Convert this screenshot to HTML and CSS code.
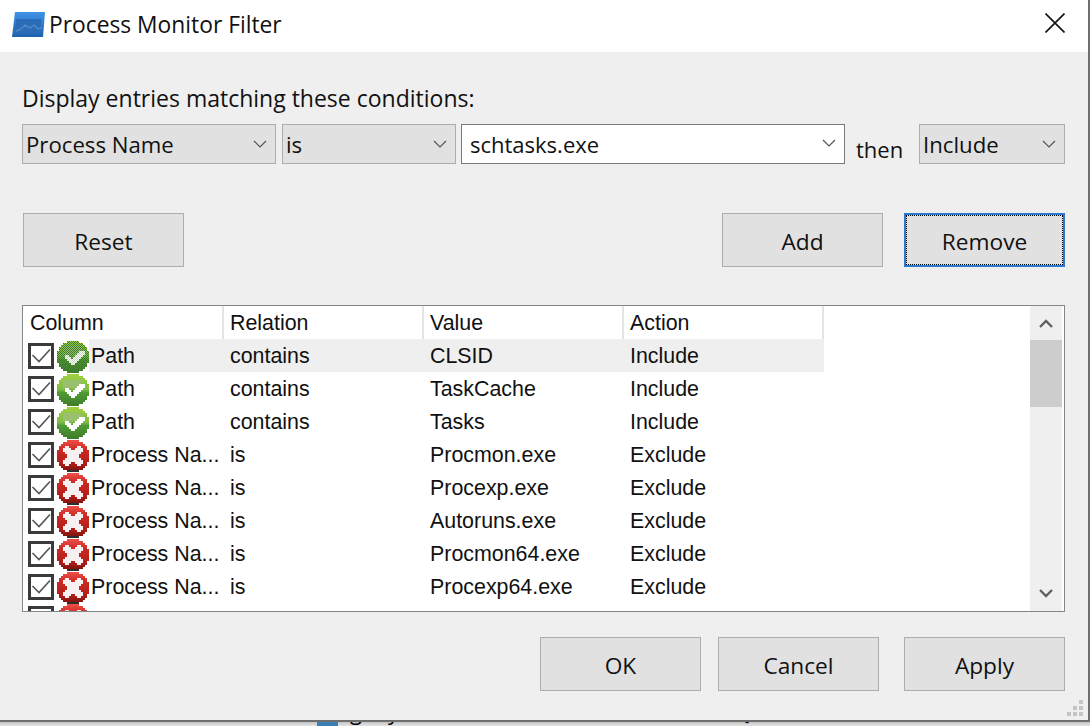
FILE: index.html
```html
<!DOCTYPE html>
<html lang="en">
<head>
  <meta charset="UTF-8">
  <title>Process Monitor Filter</title>
  <link rel="stylesheet" href="styles.css">
</head>
<body>

  <svg class="defs" width="0" height="0">
    <defs>
      <linearGradient id="greenFill" x1="0" y1="0" x2="0" y2="1">
        <stop offset="0" stop-color="#a2d040"/>
        <stop offset="0.48" stop-color="#7fbc48"/>
        <stop offset="0.58" stop-color="#4f9a35"/>
        <stop offset="1" stop-color="#3f7d2a"/>
      </linearGradient>
      <linearGradient id="redFill" x1="0" y1="0" x2="0" y2="1">
        <stop offset="0" stop-color="#ee5048"/>
        <stop offset="0.3" stop-color="#cc2a24"/>
        <stop offset="0.75" stop-color="#b01c18"/>
        <stop offset="1" stop-color="#6e100c"/>
      </linearGradient>
      <linearGradient id="appFill" x1="0" y1="0" x2="0" y2="1">
        <stop offset="0" stop-color="#3f92e6"/>
        <stop offset="1" stop-color="#1f62ae"/>
      </linearGradient>
      <pattern id="dither" width="1" height="1" patternUnits="userSpaceOnUse">
        <rect width="0.5" height="0.5" fill="#3d7a2c"/>
        <rect x="0.5" y="0.5" width="0.5" height="0.5" fill="#3d7a2c"/>
      </pattern>
      <symbol id="okIcon" viewBox="0 0 16 16" shape-rendering="crispEdges">
        <path fill="url(#greenFill)" d="M5 0h6v1h2v1h1v1h1v2h1v6h-1v2h-1v1h-1v1h-2v1h-6v-1h-2v-1h-1v-1h-1v-2h-1v-6h1v-2h1v-1h1v-1h2z"/>
        <path fill="#98c070" d="M3 3h9v4h-9z"/>
        <path fill="#fff" d="M12 5h2v2h-1v1h-1v1h-1v1h-1v1h-1v1h-2v-1h-1v-1h-1v-1h-1v-2h2v1h1v1h1v-1h1v-1h1v-1h1v-1h1z"/>
      </symbol>
      <symbol id="noIcon" viewBox="0 0 16 16" shape-rendering="crispEdges">
        <path fill="url(#redFill)" d="M5 0h6v1h2v1h1v1h1v2h1v6h-1v2h-1v1h-1v1h-2v1h-6v-1h-2v-1h-1v-1h-1v-2h-1v-6h1v-2h1v-1h1v-1h2z"/>
        <path fill="#2e2e2e" d="M5 15h6v1h-6z"/>
        <path fill="#f6f0f0" d="M3 4h1v-1h2v1h1v1h2v-1h1v-1h2v1h1v2h-1v1h-1v2h1v1h1v2h-1v1h-2v-1h-1v-1h-2v1h-1v1h-2v-1h-1v-2h1v-1h1v-2h-1v-1h-1z"/>
      </symbol>
      <symbol id="tick" viewBox="0 0 20 20">
        <path d="M1.5 9l6.5 6.5L19 3.5" fill="none" stroke="#555" stroke-width="1.6"/>
      </symbol>
      <symbol id="chevron" viewBox="0 0 14 8">
        <path d="M1 1l6 6 6-6" fill="none" stroke="#555" stroke-width="1.2"/>
      </symbol>
    </defs>
  </svg>

  <div class="window">
    <div class="titlebar">
      <svg class="app-icon" width="34" height="27" viewBox="0 0 34 27">
        <path d="M4 1h30l-2 25H1z" fill="url(#appFill)"/>
        <path d="M5 8h25l-1 15H4z" fill="#2a6cb8"/>
        <path d="M5 20l5-2 4-4 5 3 4-3 4 4 4-1" fill="none" stroke="#4f86c6" stroke-width="1.5"/>
      </svg>
      <span class="title">Process Monitor Filter</span>
      <svg class="close" width="20" height="20" viewBox="0 0 20 20">
        <path d="M0.5 0.5l19 19M19.5 0.5l-19 19" stroke="#111" stroke-width="1.6"/>
      </svg>
    </div>

    <div class="content">
      <div class="label">Display entries matching these conditions:</div>

      <div class="conditions">
        <div class="combo combo-column">Process Name<svg class="arrow"><use href="#chevron"/></svg></div>
        <div class="combo combo-relation">is<svg class="arrow"><use href="#chevron"/></svg></div>
        <div class="combo combo-value">schtasks.exe<svg class="arrow"><use href="#chevron"/></svg></div>
        <span class="then">then</span>
        <div class="combo combo-action">Include<svg class="arrow"><use href="#chevron"/></svg></div>
      </div>

      <div class="button-row middle-buttons">
        <button class="button reset">Reset</button>
        <button class="button">Add</button>
        <button class="button focused"><span>Remove</span></button>
      </div>

      <div class="list">
        <div class="list-main">
          <div class="row header">
            <div class="cell">Column</div>
            <div class="cell">Relation</div>
            <div class="cell">Value</div>
            <div class="cell">Action</div>
          </div>
          <div class="row selected">
            <div class="cell first"><i class="check"><svg><use href="#tick"/></svg></i>
              <svg class="state" viewBox="0 0 16 16" shape-rendering="crispEdges">
                <use href="#okIcon" width="16" height="16"/>
                <path fill="url(#dither)" d="M5 0h6v1h2v1h1v1h1v2h1v6h-1v2h-1v1h-1v1h-2v1h-6v-1h-2v-1h-1v-1h-1v-2h-1v-6h1v-2h1v-1h1v-1h2z"/>
                <path fill="#fff" opacity="0.7" d="M12 5h2v2h-1v1h-1v1h-1v1h-1v1h-1v1h-2v-1h-1v-1h-1v-1h-1v-2h2v1h1v1h1v-1h1v-1h1v-1h1v-1h1z"/>
              </svg>
              <span class="name">Path</span></div>
            <div class="cell">contains</div><div class="cell">CLSID</div><div class="cell">Include</div>
          </div>
          <div class="row">
            <div class="cell first"><i class="check"><svg><use href="#tick"/></svg></i><svg class="state"><use href="#okIcon"/></svg><span class="name">Path</span></div>
            <div class="cell">contains</div><div class="cell">TaskCache</div><div class="cell">Include</div>
          </div>
          <div class="row">
            <div class="cell first"><i class="check"><svg><use href="#tick"/></svg></i><svg class="state"><use href="#okIcon"/></svg><span class="name">Path</span></div>
            <div class="cell">contains</div><div class="cell">Tasks</div><div class="cell">Include</div>
          </div>
          <div class="row">
            <div class="cell first"><i class="check"><svg><use href="#tick"/></svg></i><svg class="state"><use href="#noIcon"/></svg><span class="name">Process Na...</span></div>
            <div class="cell">is</div><div class="cell">Procmon.exe</div><div class="cell">Exclude</div>
          </div>
          <div class="row">
            <div class="cell first"><i class="check"><svg><use href="#tick"/></svg></i><svg class="state"><use href="#noIcon"/></svg><span class="name">Process Na...</span></div>
            <div class="cell">is</div><div class="cell">Procexp.exe</div><div class="cell">Exclude</div>
          </div>
          <div class="row">
            <div class="cell first"><i class="check"><svg><use href="#tick"/></svg></i><svg class="state"><use href="#noIcon"/></svg><span class="name">Process Na...</span></div>
            <div class="cell">is</div><div class="cell">Autoruns.exe</div><div class="cell">Exclude</div>
          </div>
          <div class="row">
            <div class="cell first"><i class="check"><svg><use href="#tick"/></svg></i><svg class="state"><use href="#noIcon"/></svg><span class="name">Process Na...</span></div>
            <div class="cell">is</div><div class="cell">Procmon64.exe</div><div class="cell">Exclude</div>
          </div>
          <div class="row">
            <div class="cell first"><i class="check"><svg><use href="#tick"/></svg></i><svg class="state"><use href="#noIcon"/></svg><span class="name">Process Na...</span></div>
            <div class="cell">is</div><div class="cell">Procexp64.exe</div><div class="cell">Exclude</div>
          </div>
          <div class="row">
            <div class="cell first"><i class="check"><svg><use href="#tick"/></svg></i><svg class="state"><use href="#noIcon"/></svg></div>
          </div>
        </div>
        <div class="scrollbar">
          <svg class="scroll-arrow arrow-up" width="14" height="9" viewBox="0 0 14 9"><path d="M1 8l6-6 6 6" fill="none" stroke="#606060" stroke-width="2.4"/></svg>
          <div class="thumb"></div>
          <div class="track"></div>
          <svg class="scroll-arrow arrow-down" width="14" height="9" viewBox="0 0 14 9"><path d="M1 1l6 6 6-6" fill="none" stroke="#606060" stroke-width="2.4"/></svg>
        </div>
      </div>

      <div class="button-row footer-buttons">
        <button class="button">OK</button>
        <button class="button">Cancel</button>
        <button class="button">Apply</button>
      </div>
    </div>

    <svg class="grip" width="16" height="16" viewBox="0 0 16 16">
      <path fill="#c4c4c4" d="M12 0h4v4h-4zM6 6h4v4h-4zM12 6h4v4h-4zM0 12h4v4h-4zM6 12h4v4h-4zM12 12h4v4h-4z"/>
    </svg>
  </div>

  <div class="behind">
    <i class="tile"></i>
    <span class="peek peek-g">g</span>
    <span class="peek peek-y">y</span>
    <span class="peek peek-b">{</span>
  </div>

</body>
</html>
```

FILE: styles.css
```css
* {
  box-sizing: border-box;
}

html, body {
  margin: 0;
  height: 726px;
  overflow: hidden;
}

body {
  background: #d9d9d9;
  font-family: "Open Sans", sans-serif;
  color: #111;
}

.defs {
  display: block;
  height: 0;
}

.window {
  position: relative;
  width: 1090px;
  height: 722px;
  background: #efefef;
  border-right: 2px solid #6e6e6e;
  border-bottom: 2px solid #6e6e6e;
}

.titlebar {
  display: flex;
  align-items: center;
  height: 52px;
  background: #fff;
  padding: 0 23px 0 11px;
}

.app-icon {
  filter: blur(0.7px);
  margin-right: 4px;
  margin-bottom: 3px;
}

.title {
  font-size: 22.8px;
  flex: 1;
  margin-bottom: 4px;
}

.close {
  margin-bottom: 6px;
}

.content {
  padding: 29px 23px 0 22px;
}

.label {
  font-size: 23px;
  line-height: 34px;
  margin-bottom: 9px;
}

.conditions {
  display: flex;
  align-items: center;
  height: 40px;
}

.combo {
  display: flex;
  align-items: center;
  justify-content: space-between;
  height: 40px;
  padding: 3px 8px 2px 3px;
  background: #e1e1e1;
  border: 1px solid #adadad;
  font-size: 22.2px;
}

.combo-column {
  width: 254px;
  margin-right: 6px;
}

.combo-relation {
  width: 174px;
  margin-right: 5px;
}

.combo-value {
  width: 384px;
  padding: 1px 8px 2px;
  background: #fff;
  border-color: #7a7a7a;
  font-size: 22px;
}

.combo-action {
  width: 146px;
}

.arrow {
  width: 14px;
  height: 8px;
  margin-top: -2px;
}

.then {
  width: 74px;
  padding: 10px 0 0 11px;
  font-size: 22px;
}

.button-row {
  display: flex;
}

.middle-buttons {
  margin-top: 49px;
  margin-left: 1px;
  gap: 21px;
}

.reset {
  margin-right: auto;
}

.footer-buttons {
  margin-top: 25px;
  justify-content: flex-end;
  gap: 17px;
}

.footer-buttons .button:last-child {
  margin-left: 8px;
}

.button {
  width: 161px;
  height: 54px;
  padding: 2px 0 0;
  background: #e1e1e1;
  border: 1px solid #adadad;
  font-family: inherit;
  font-size: 22.7px;
  color: #111;
}

.focused {
  border: 2px solid #2b78d0;
  padding: 0;
}

.focused span {
  display: flex;
  align-items: center;
  justify-content: center;
  height: 100%;
  padding-top: 2px;
  border: 1px dotted #000;
}

.list {
  display: flex;
  height: 307px;
  margin-top: 38px;
  background: #fff;
  border: 1px solid #82878c;
  overflow: hidden;
  font-family: "Liberation Sans", sans-serif;
  font-size: 21.4px;
}

.list-main {
  flex: 1;
  overflow: hidden;
}

.row {
  display: grid;
  grid-template-columns: 201px 200px 200px 200px;
  height: 33px;
  width: 801px;
  align-items: center;
}

.header .cell {
  height: 33px;
  border-right: 2px solid #e5e5e5;
  padding-left: 6px;
}

.header .cell:first-child {
  padding-left: 7px;
}

.cell {
  padding-left: 6px;
  white-space: nowrap;
  line-height: 35px;
}

.first {
  display: flex;
  align-items: center;
  padding-left: 5px;
  line-height: 33px;
}

.selected {
  background: linear-gradient(to right, transparent 66px, #efefef 66px);
}

.check {
  flex: none;
  width: 26px;
  height: 26px;
  margin-top: -1px;
  border: 3px solid #3a3a3a;
  background: #fff;
  margin-right: 3px;
}

.check svg {
  display: block;
  width: 20px;
  height: 20px;
}

.state {
  flex: none;
  width: 32px;
  height: 32px;
  margin-right: 2px;
}

.scrollbar {
  display: flex;
  flex-direction: column;
  align-items: center;
  width: 32px;
  margin-right: 2px;
  background: #efefef;
}

.scroll-arrow {
  flex: none;
}

.arrow-up {
  margin: 13px 0 12px;
}

.arrow-down {
  margin: 13px 0 13px;
}

.thumb {
  flex: none;
  align-self: stretch;
  height: 67px;
  background: #cdcdcd;
}

.track {
  flex: 1;
}

.grip {
  position: absolute;
  right: 5px;
  bottom: 4px;
}

.behind {
  position: absolute;
  left: 0;
  top: 722px;
  width: 1090px;
  height: 4px;
  overflow: hidden;
  background: linear-gradient(#c4c4c4, #e4e4e4);
}

.tile {
  position: absolute;
  left: 317px;
  top: 0;
  width: 21px;
  height: 4px;
  background: #3a7fb5;
}

.peek {
  position: absolute;
  top: -23px;
  font-size: 22px;
  line-height: 24px;
  color: #000;
}

.peek-g {
  left: 350px;
}

.peek-y {
  left: 388px;
}

.peek-b {
  left: 741px;
}
```
